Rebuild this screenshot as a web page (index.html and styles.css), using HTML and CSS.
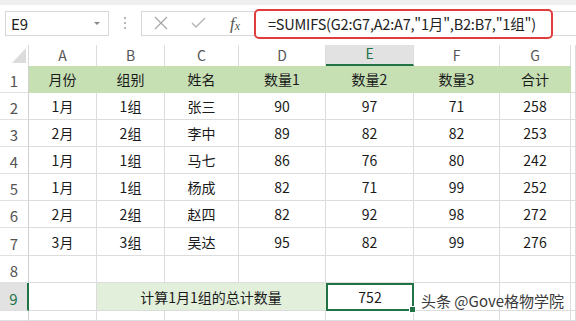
FILE: index.html
```html
<!DOCTYPE html>
<html lang="zh-CN">
<head>
    <meta charset="UTF-8">
    <meta name="viewport" content="width=device-width, initial-scale=1.0">
    <title>SUMIFS</title>
    <link rel="stylesheet" href="styles.css">
</head>
<body>
    <div class="app">
        <div class="top-strip"></div>
        <div class="formula-bar">
            <div class="name-box">
                <span>E9</span>
                <svg class="caret" width="6" height="4" viewBox="0 0 6 4"><path d="M0 0 L6 0 L3 3 Z" fill="#888"/></svg>
            </div>
            <div class="grip"><i></i><i></i><i></i></div>
            <div class="fx-buttons">
                <svg width="14" height="14" viewBox="0 0 14 14"><path d="M1 1 L13 13 M13 1 L1 13" stroke="#a8a8a8" stroke-width="1.3" fill="none"/></svg>
                <svg width="15" height="12" viewBox="0 0 15 12"><path d="M1 6 L5 10 L14 1" stroke="#b4b4b4" stroke-width="1.4" fill="none"/></svg>
                <span class="fx">f<sub>x</sub></span>
            </div>
            <div class="formula-input">
                <div class="formula-box">=SUMIFS(G2:G7,A2:A7,"1月",B2:B7,"1组")</div>
            </div>
        </div>

        <div class="sheet">
            <div class="corner"><svg width="14" height="15" viewBox="0 0 14 15"><path d="M14 0 L14 15 L0 15 Z" fill="#dcdcdc"/></svg></div>
            <div class="col-head">A</div>
            <div class="col-head">B</div>
            <div class="col-head">C</div>
            <div class="col-head">D</div>
            <div class="col-head active">E</div>
            <div class="col-head">F</div>
            <div class="col-head">G</div>
            <div class="col-head"></div>

            <div class="row-head">1</div>
            <div class="cell title">月份</div>
            <div class="cell title">组别</div>
            <div class="cell title">姓名</div>
            <div class="cell title">数量1</div>
            <div class="cell title">数量2</div>
            <div class="cell title">数量3</div>
            <div class="cell title">合计</div>
            <div class="cell"></div>

            <div class="row-head">2</div>
            <div class="cell">1月</div><div class="cell">1组</div><div class="cell">张三</div>
            <div class="cell">90</div><div class="cell">97</div><div class="cell">71</div><div class="cell">258</div><div class="cell"></div>

            <div class="row-head">3</div>
            <div class="cell">2月</div><div class="cell">2组</div><div class="cell">李中</div>
            <div class="cell">89</div><div class="cell">82</div><div class="cell">82</div><div class="cell">253</div><div class="cell"></div>

            <div class="row-head">4</div>
            <div class="cell">1月</div><div class="cell">1组</div><div class="cell">马七</div>
            <div class="cell">86</div><div class="cell">76</div><div class="cell">80</div><div class="cell">242</div><div class="cell"></div>

            <div class="row-head">5</div>
            <div class="cell">1月</div><div class="cell">1组</div><div class="cell">杨成</div>
            <div class="cell">82</div><div class="cell">71</div><div class="cell">99</div><div class="cell">252</div><div class="cell"></div>

            <div class="row-head">6</div>
            <div class="cell">2月</div><div class="cell">2组</div><div class="cell">赵四</div>
            <div class="cell">82</div><div class="cell">92</div><div class="cell">98</div><div class="cell">272</div><div class="cell"></div>

            <div class="row-head">7</div>
            <div class="cell">3月</div><div class="cell">3组</div><div class="cell">吴达</div>
            <div class="cell">95</div><div class="cell">82</div><div class="cell">99</div><div class="cell">276</div><div class="cell"></div>

            <div class="row-head">8</div>
            <div class="cell"></div><div class="cell"></div><div class="cell"></div>
            <div class="cell"></div><div class="cell"></div><div class="cell"></div><div class="cell"></div><div class="cell"></div>

            <div class="row-head active">9</div>
            <div class="cell"></div>
            <div class="cell merged">计算1月1组的总计数量</div>
            <div class="cell selected">752</div>
            <div class="cell"></div><div class="cell"></div><div class="cell"></div>

            <div class="row-head"></div>
            <div class="cell"></div><div class="cell"></div><div class="cell"></div>
            <div class="cell"></div><div class="cell"></div><div class="cell"></div><div class="cell"></div><div class="cell"></div>
        </div>

        <div class="watermark">头条 @Gove格物学院</div>
    </div>
</body>
</html>
```

FILE: styles.css
```css
* {
    box-sizing: border-box;
}

body {
    margin: 0;
    padding: 0;
    background-color: #fff;
    font-family: "Noto Sans CJK SC", "Open Sans", sans-serif;
    color: #222;
}

.app {
    position: relative;
    width: 576px;
    height: 321px;
    overflow: hidden;
}

.top-strip {
    height: 5px;
    background-color: #efefef;
}

.formula-bar {
    display: flex;
    align-items: center;
    height: 40px;
    padding: 0 0 4px 5px;
}

.name-box {
    display: flex;
    align-items: center;
    justify-content: space-between;
    width: 104px;
    height: 25px;
    padding: 0 8px 0 5px;
    border: 1px solid #d8d8d8;
    font-size: 15px;
    color: #222;
}

.caret {
    margin-top: 1px;
}

.grip {
    display: flex;
    flex-direction: column;
    gap: 3px;
    width: 32px;
    align-items: center;
}

.grip i {
    display: block;
    width: 2px;
    height: 2px;
    background-color: #b8b8b8;
}

.fx-buttons {
    display: flex;
    align-items: center;
    justify-content: space-between;
    width: 111px;
    height: 25px;
    padding: 0 12px 0 12px;
    border: 1px solid #d8d8d8;
    border-right: none;
}

.fx {
    font-family: "Liberation Serif", serif;
    font-style: italic;
    font-size: 17px;
    color: #555;
    line-height: 1;
}

.fx sub {
    font-size: 12px;
    vertical-align: -1px;
}

.formula-input {
    flex: 1;
    height: 25px;
    border-top: 1px solid #d8d8d8;
    border-bottom: 1px solid #d8d8d8;
    position: relative;
}

.formula-box {
    position: absolute;
    left: 2px;
    top: -3px;
    width: 299px;
    height: 30px;
    border: 2px solid #e03c3c;
    border-radius: 5px;
    padding-left: 12px;
    font-size: 14.5px;
    letter-spacing: -0.2px;
    line-height: 25px;
    white-space: nowrap;
    color: #222;
    background-color: #fff;
}

.sheet {
    display: grid;
    grid-template-columns: 29px 68px 68px 74px 87px 88px 86px 71px 1fr;
    grid-template-rows: 21px 27px 27px 27px 27px 27px 27px 28px 27px 28px 1fr;
    height: 276px;
}

.corner {
    display: flex;
    align-items: flex-end;
    justify-content: flex-end;
    padding: 0 2px 3px 0;
    border-right: 1px solid #d8d8d8;
}

.col-head {
    display: flex;
    align-items: flex-end;
    justify-content: center;
    padding-bottom: 1px;
    border-right: 1px solid #dcdcdc;
    font-size: 14px;
    color: #555;
}

.col-head.active {
    background-color: #e2e2e2;
    color: #217346;
    border-bottom: 2px solid #217346;
}

.row-head {
    display: flex;
    align-items: flex-end;
    justify-content: center;
    padding-bottom: 1px;
    border-right: 1px solid #d0d0d0;
    border-bottom: 1px solid #e0e0e0;
    font-size: 15px;
    color: #555;
}

.row-head.active {
    background-color: #e2e2e2;
    color: #217346;
    border-right: 2px solid #217346;
}

.cell {
    display: flex;
    align-items: center;
    justify-content: center;
    border-right: 1px solid #dcdcdc;
    border-bottom: 1px solid #dcdcdc;
    font-size: 14px;
    color: #1a1a1a;
}

.cell.title {
    background-color: #c6e0b4;
    border-right-color: #c6e0b4;
    border-bottom-color: #c6e0b4;
}

.cell.merged {
    grid-column: span 3;
    background-color: #e2efda;
    border-right-color: #e2efda;
}

.cell.selected {
    position: relative;
    border: 2px solid #217346;
}

.cell.selected::after {
    content: "";
    position: absolute;
    right: -4px;
    bottom: -4px;
    width: 5px;
    height: 5px;
    background-color: #217346;
    border: 1px solid #fff;
}

.watermark {
    position: absolute;
    left: 421px;
    top: 290px;
    font-size: 15px;
    color: #3a3a3a;
    text-shadow: 0 0 2px #fff;
}
```
